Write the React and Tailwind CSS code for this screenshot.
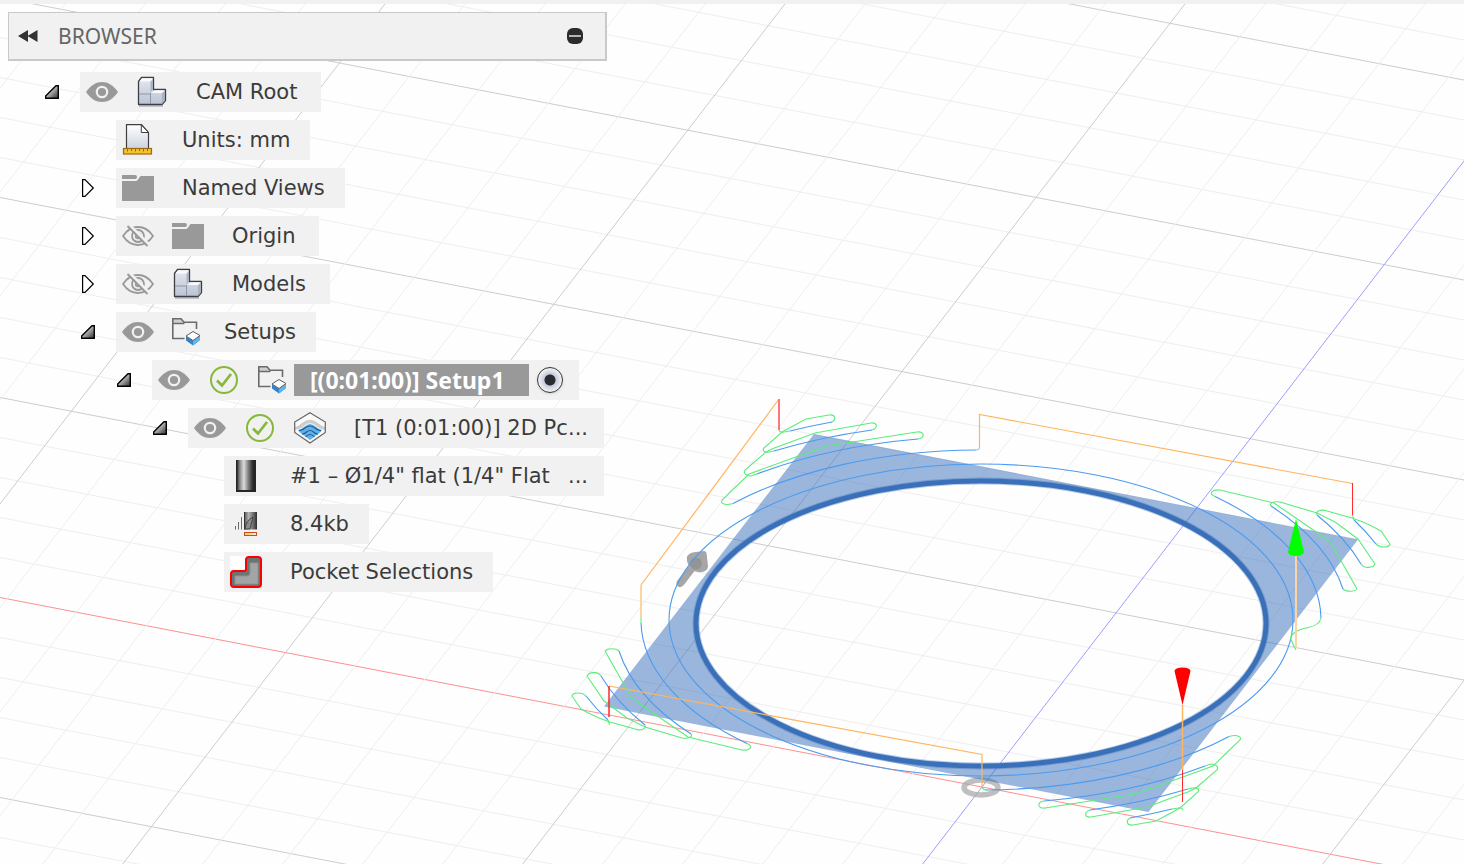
import { useState } from 'react';

const ORIGIN = { x: 982, y: 787 };

// grid steps, one major line every five
const ROW_STEP = 40;
const COL_STEP = 80;
const ROW_SLOPE = 0.193;
const COL_SLOPE = 0.77;

const range = (from, to) => Array.from({ length: to - from + 1 }, (_, i) => from + i);

function lineColor(n, axis) {
  if (n === 0) return axis;
  return n % 5 === 0 ? '#cdcdcd' : '#eeeeee';
}

function Grid() {
  const rows = range(-40, 30).sort((a, b) => (a % 5 === 0) - (b % 5 === 0));
  const cols = range(-30, 30).sort((a, b) => (a % 5 === 0) - (b % 5 === 0));

  return (
    <g strokeWidth="1">
      {rows.map((n) => (
        <line
          key={`r${n}`}
          x1={ORIGIN.x - 2000}
          y1={ORIGIN.y + n * ROW_STEP - 2000 * ROW_SLOPE}
          x2={ORIGIN.x + 3000}
          y2={ORIGIN.y + n * ROW_STEP + 3000 * ROW_SLOPE}
          stroke={lineColor(n, '#ff9090')}
        />
      ))}
      {cols.map((n) => (
        <line
          key={`c${n}`}
          x1={ORIGIN.x + n * COL_STEP + 1200 * COL_SLOPE}
          y1={ORIGIN.y - 1200}
          x2={ORIGIN.x + n * COL_STEP - 1200 * COL_SLOPE}
          y2={ORIGIN.y + 1200}
          stroke={lineColor(n, '#9d9dff')}
        />
      ))}
    </g>
  );
}

function CornerNorth() {
  return (
    <>
      <g stroke="#4b9bf0">
        <path d="M733 503.500 A340 170 0 0 1 976 450" />
        <path d="M757 474 A368 184 0 0 1 918 439" />
        <path d="M774 451 A396 198 0 0 1 872 430" />
        <path d="M790 431 A424 212 0 0 1 832 422" />
      </g>
      <g stroke="#5cec7c">
        <path d="M779 430 Q780 433 784 432 L790 431" />
        <path d="M832 422 C836 420 836 414 829 415 L806 419 L793 426 L782 432 L764 448 C762 451 765 453 769 452 L774 451" />
        <path d="M872 430 C878 428 878 422 871 423 L815 433 L773 448.500 L766 452 L745 470 C743 473 746 476 751 476 L757 474" />
        <path d="M918 439 C925 438 925 431 917 432 L827 446 L793 458 L749 474 L722 500 C720 503 724 506 733 503.500" />
      </g>
    </>
  );
}

function CornerEast() {
  return (
    <>
      <g stroke="#4b9bf0">
        <path d="M1215 496.500 A340 170 0 0 1 1321 618" />
        <path d="M1271 506 A368 184 0 0 1 1343 589" />
        <path d="M1317 515 A396 198 0 0 1 1361 564" />
        <path d="M1354 520 A424 212 0 0 1 1376 544" />
      </g>
      <g stroke="#5cec7c">
        <path d="M1352.500 515 L1354 520" />
        <path d="M1376 544 C1380 548 1389 548 1390 544 L1381 531 Q1374 527 1363 522 L1352 518 L1327 511 C1321 509 1315 511 1317 515" />
        <path d="M1361 564 C1364 569 1373 568 1375 564 L1358 539 L1335 522 L1317 513 L1280 502 C1273 501 1269 503 1271 506" />
        <path d="M1343 589 C1346 592 1355 592 1357 589 L1331 543 L1322 536 L1274 503 L1220 490 C1212 489 1208 494 1215 496.500" />
      </g>
    </>
  );
}

function Scene() {
  return (
    <svg className="absolute inset-0 w-full h-full" fill="none" aria-hidden="true">
      <Grid />

      {/* origin marker */}
      <ellipse cx="981" cy="787.500" rx="17" ry="7.500" stroke="#aaaaaa" strokeOpacity="0.75" strokeWidth="5.500" />

      {/* pocket floor with the round boss cut out */}
      <path
        d="M814 434 L1358 539.500 L1148.500 812 L604 706.500 Z M696 623 A285 143 0 1 0 1266 623 A285 143 0 1 0 696 623 Z"
        fill="#376eb9"
        fillOpacity="0.5"
        fillRule="evenodd"
      />
      <ellipse cx="981" cy="623.500" rx="285" ry="142.500" stroke="#3a70ba" strokeOpacity="0.35" strokeWidth="7" />
      <ellipse cx="981" cy="623.500" rx="285" ry="142.500" stroke="#3a70ba" strokeWidth="5" />

      <g fill="#888888" fillOpacity="0.75">
        <path d="M690 553.500 Q692 552 696 552 L704 551 Q706 551 706.500 553 L708 566 Q708 570 704 571.500 Q699 573 694.500 571 L685 583.500 Q682 588 679 587 Q675 585 677 581 L689 566 Q684 557 690 553.500 Z" />
        <circle cx="696" cy="563.500" r="6" fillOpacity="0.6" />
      </g>

      <g strokeWidth="1.1">
        <ellipse cx="981" cy="620" rx="312" ry="156" stroke="#4b9bf0" />
        <CornerNorth />
        <path d="M976 450 Q980 450 979.500 446" stroke="#8fbff0" />
        <g transform="rotate(180 981 620)">
          <CornerNorth />
          <CornerEast />
        </g>
        <CornerEast />
        <path d="M1321 618 C1320 623 1316 626 1308 627.500 C1301 629 1293 631 1290.500 638 Q1293 645 1296 650" stroke="#5cec7c" />
        <path d="M982 787 Q983 790 987 790" stroke="#5cec7c" />
      </g>

      <g stroke="#ffb55f" strokeWidth="1.2">
        <path d="M641 585 L779 399" />
        <path d="M979.500 447 V414.500 L1352.500 483.500" />
        <path d="M609 686 L982 754.500 V787" />
        <path d="M1182.500 705 V770" strokeWidth="1.500" />
      </g>
      <g stroke="#fdd3a2" strokeWidth="2">
        <path d="M641 585 V617" />
        <path d="M1296 556 V648" />
      </g>
      <path d="M641 617 V623" stroke="#a5f7b7" strokeWidth="2" />
      <g stroke="#ff2a2a">
        <path d="M779 399 V430" stroke="#ff7777" strokeWidth="2" />
        <path d="M1352.500 483 V515" />
        <path d="M609 686 V717" strokeWidth="2" strokeOpacity="0.75" />
        <path d="M1182.500 770 V802" />
      </g>

      <path d="M1296 519 L1288 552 Q1289 556 1296 556 Q1303 556 1304 552 Z" fill="#00ff00" />
      <path d="M1182.500 705 L1174.500 671 Q1175 667.500 1182.500 667.500 Q1190 667.500 1190.500 671 Z" fill="#ff0000" />
    </svg>
  );
}

function EyeIcon({ off }) {
  if (off) {
    return (
      <svg className="w-8 h-8" viewBox="0 0 32 32" fill="none" stroke="#999999" strokeWidth="1.8">
        <path d="M1 16 C5 10 10 7 16 7 S27 10 31 16 C27 22 22 25 16 25 S5 22 1 16 Z" />
        <circle cx="16" cy="16" r="6" />
        <circle cx="16" cy="16" r="2.300" />
        <path d="M7.500 5 L27.500 25" stroke="#f1f1f1" strokeWidth="3" />
        <path d="M5.500 6 L25.500 26" />
      </svg>
    );
  }
  return (
    <svg className="w-8 h-8" viewBox="0 0 32 32" fill="#999999">
      <path d="M0 16 C5 9 10 6 16 6 S27 9 32 16 C27 23 22 26 16 26 S5 23 0 16 Z" />
      <circle cx="16" cy="16" r="5.200" stroke="#f1f1f1" strokeWidth="2.200" />
    </svg>
  );
}

function CheckIcon() {
  return (
    <svg className="w-8 h-8" viewBox="0 0 32 32" fill="none" stroke="#86b93a">
      <circle cx="16" cy="16" r="13" strokeWidth="2" />
      <path d="M9 16.500 L14 21.500 L23 10" strokeWidth="2.800" />
    </svg>
  );
}

function FolderIcon() {
  return (
    <svg className="w-8 h-8" viewBox="0 0 32 32" fill="#999999">
      <path d="M0 3 H13 Q15 3 15 5 Q15 7 13 7 H0 Z" />
      <path d="M0 9 H13.500 Q15 9 16 7.500 L18.500 4 H32 V29 H0 Z" />
    </svg>
  );
}

function BodiesIcon() {
  return (
    <svg className="w-8 h-8" viewBox="0 0 32 32" stroke="#3c3f45" strokeLinejoin="round">
      <defs>
        <linearGradient id="body" x1="0" y1="0" x2="0" y2="1">
          <stop offset="0" stopColor="#e4e8f0" />
          <stop offset="1" stopColor="#bcc3d3" />
        </linearGradient>
      </defs>
      <path d="M3 30 H27" stroke="#c4c4c4" strokeWidth="2" />
      <path d="M2.500 5.500 L5.500 1.500 H17.500 V13.500 H29.500 V24.500 L26 28.500 H2.500 Z" fill="url(#body)" strokeWidth="1.300" />
      <path d="M3.500 5.500 L6 2.200 H16.800 L14 5.500 Z M15.500 17 L18.500 14.200 H28.800 L26 17 Z" fill="#fafbfd" stroke="none" />
      <path d="M26 17.500 L29 14.500 V24.500 L26 28 Z M14.500 6 L17 3 V13.500 L14.500 16 Z" fill="#aab2c2" stroke="none" />
      <path d="M3 18 H14.500 M14.500 17 V28" stroke="#8e97aa" fill="none" />
    </svg>
  );
}

function UnitsIcon() {
  return (
    <svg className="w-8 h-8" viewBox="0 0 32 32">
      <defs>
        <linearGradient id="page" x1="0" y1="0" x2="0" y2="1">
          <stop offset="0" stopColor="#ffffff" />
          <stop offset="1" stopColor="#cdd2df" />
        </linearGradient>
      </defs>
      <path d="M4.500 25 V0.700 H19.500 L26.500 8.500 V25" fill="url(#page)" stroke="#3f3f3f" strokeWidth="1.200" />
      <path d="M19.300 1 V8.500 H26.500 Z" fill="#ffffff" stroke="#3f3f3f" strokeLinejoin="round" />
      <rect x="1.500" y="24.500" width="28" height="5.500" fill="#f2c230" stroke="#a06a10" strokeWidth="1.200" />
      <path d="M5.500 25 V27.500 M9.500 25 V27 M13.500 25 V27.500 M17.500 25 V27 M21.500 25 V27.500 M25.500 25 V27" stroke="#a06a10" />
    </svg>
  );
}

function SetupIcon() {
  return (
    <svg className="w-8 h-8" viewBox="0 0 32 32" fill="none">
      <path d="M1 7.500 V2.700 H8.500 L11.500 7.500 Z" fill="#cfcfcf" />
      <path d="M12.500 22.500 H0.800 V2.700 H9 L12 6.200 H24.500 V13 M1 7.500 H11.500 L12.500 6.200" stroke="#6b6b6b" strokeWidth="1.600" />
      <path d="M14 20 L21 24.500 L28 19.500 V24 L21 29.500 L14 24.500 Z" fill="#2f86cc" />
      <path d="M21 24.500 L28 19.500 V24 L21 29.500 Z" fill="#63b3ea" />
      <path d="M14 20 L21 15.500 L28 19.500 L21 24.500 Z" fill="#ffffff" stroke="#5a5f66" />
    </svg>
  );
}

function PocketOpIcon() {
  return (
    <svg className="w-8 h-8" viewBox="0 0 32 32" fill="none">
      <path d="M16 0.700 L31.300 10 V20.500 L16 31 L0.700 20.500 V10 Z" fill="#fafafa" />
      <path d="M1 15 Q5 14 8 11 Q16 4.500 24 11 Q27 14 31 15 V18 L27.500 17 Q24 16 21.500 13.500 Q16 9 10.500 13.500 Q8 16 4.500 17 L1 18 Z" fill="#cdcdcd" />
      <path d="M4 18 Q8 17 10.500 14.500 Q16 9.500 21.500 14.500 Q24 17 28 18 L26 20.500 L16 28 L6 20.500 Z" fill="#62b0ea" />
      <path d="M5 18.800 Q9 18 11 16 Q16 12 21 16 Q23 18 27 18.800 M8 22.200 Q11 21.500 12.500 20 Q16 17 19.500 20 Q21 21.500 24 22.200 M11.500 25 Q16 20 20.500 25" stroke="#1d5c94" strokeWidth="1.100" />
      <path d="M16 0.700 L31.300 10 V20.500 L16 31 L0.700 20.500 V10 Z" stroke="#666666" strokeWidth="1.200" />
    </svg>
  );
}

function ToolIcon() {
  return (
    <svg className="w-8 h-8" viewBox="0 0 32 32">
      <defs>
        <linearGradient id="steel">
          <stop offset="0" stopColor="#2b2b2b" />
          <stop offset="0.150" stopColor="#888888" />
          <stop offset="0.380" stopColor="#dcdcdc" />
          <stop offset="0.600" stopColor="#8a8a8a" />
          <stop offset="0.850" stopColor="#333333" />
          <stop offset="1" stopColor="#1f1f1f" />
        </linearGradient>
      </defs>
      <rect x="6" y="0" width="20" height="32" fill="#262626" />
      <rect x="7" y="0" width="18" height="30" fill="url(#steel)" />
    </svg>
  );
}

function ToolpathSizeIcon() {
  return (
    <svg className="w-8 h-8" viewBox="0 0 32 32">
      <defs>
        <linearGradient id="hot">
          <stop offset="0" stopColor="#ffc24a" />
          <stop offset="1" stopColor="#fff4e0" />
        </linearGradient>
        <linearGradient id="cutter">
          <stop offset="0" stopColor="#4a4a4a" />
          <stop offset="0.350" stopColor="#b4b4b4" />
          <stop offset="0.800" stopColor="#5a5a5a" />
          <stop offset="1" stopColor="#2b2b2b" />
        </linearGradient>
      </defs>
      <path d="M5.500 21.500 V18 M8.500 21.500 V14 M11.500 21.500 V9" stroke="#6a6a6a" />
      <rect x="14" y="4" width="13" height="17.500" fill="url(#cutter)" />
      <path d="M15 21 Q16 12 23 9 L20 21 Z" fill="#8b8b8b" stroke="#444444" />
      <path d="M14.500 4 V21.500" stroke="#333333" />
      <rect x="14.500" y="24.500" width="12" height="3" fill="url(#hot)" stroke="#c8501e" />
    </svg>
  );
}

function PocketIcon() {
  const outline = 'M16 4 Q16 1 19 1 H28 Q31 1 31 4 V28 Q31 31 28 31 H4 Q1 31 1 28 V18 Q1 15 4 15 H14 Q16 15 16 13 Z';
  return (
    <svg className="w-8 h-8" viewBox="0 0 32 32">
      <path d="M0 0 H18 V16 H0 Z" fill="#ffffff" />
      <path d={outline} fill="#6c7476" />
      <path d="M20 7 H28 V28 H5 V20 H17 Q20 20 20 17 Z" fill="#a3a5a5" stroke="#8c9292" strokeLinejoin="round" />
      <path d={outline} fill="none" stroke="#ff0000" strokeWidth="2" />
    </svg>
  );
}

const ICONS = {
  bodies: BodiesIcon,
  units: UnitsIcon,
  folder: FolderIcon,
  setup: SetupIcon,
  pocketOp: PocketOpIcon,
  tool: ToolIcon,
  size: ToolpathSizeIcon,
  pocket: PocketIcon,
};

const tree = {
  label: 'CAM Root',
  icon: 'bodies',
  eye: 'on',
  open: true,
  children: [
    { label: 'Units: mm', icon: 'units' },
    { label: 'Named Views', icon: 'folder', open: false },
    { label: 'Origin', icon: 'folder', eye: 'off', open: false },
    { label: 'Models', icon: 'bodies', eye: 'off', open: false },
    {
      label: 'Setups',
      icon: 'setup',
      eye: 'on',
      open: true,
      children: [
        {
          label: '[(0:01:00)] Setup1',
          icon: 'setup',
          eye: 'on',
          checked: true,
          active: true,
          open: true,
          children: [
            {
              label: '[T1 (0:01:00)] 2D Pc',
              cut: true,
              icon: 'pocketOp',
              eye: 'on',
              checked: true,
              open: true,
              children: [
                { label: '#1 – Ø1/4" flat (1/4" Flat', cut: true, icon: 'tool' },
                { label: '8.4kb', icon: 'size' },
                { label: 'Pocket Selections', icon: 'pocket' },
              ],
            },
          ],
        },
      ],
    },
  ],
};

function Expander({ open, label, onClick }) {
  return (
    <button type="button" onClick={onClick} aria-expanded={open} aria-label={`Toggle ${label}`} className="w-9 h-10 shrink-0 flex items-center">
      {open ? (
        <svg className="w-4 h-4" viewBox="0 0 16 16">
          <defs>
            <linearGradient id="wedge" x1="0.300" y1="0.300" x2="1" y2="1">
              <stop offset="0" stopColor="#d8d8d8" />
              <stop offset="1" stopColor="#2a2a2a" />
            </linearGradient>
          </defs>
          <path d="M1.700 12 L12 1.700 H14.300 V14.300 H1.700 Z" fill="url(#wedge)" stroke="#000000" strokeWidth="1.400" />
        </svg>
      ) : (
        <svg className="w-4 h-5" viewBox="0 0 16 20">
          <path d="M2.600 1.600 H5 L13.300 10 L5 18.400 H2.600 Z" fill="#ffffff" stroke="#000000" strokeWidth="1.200" />
        </svg>
      )}
    </button>
  );
}

function TreeNode({ node }) {
  const [open, setOpen] = useState(node.open);
  const [hidden, setHidden] = useState(node.eye === 'off');
  const Icon = ICONS[node.icon];
  const canExpand = node.open !== undefined;

  let labelStyle = node.eye ? 'ml-7 pr-6' : 'ml-7 pr-5';
  if (node.icon === 'setup') labelStyle = 'ml-5 pr-5';
  if (node.cut) labelStyle = 'ml-7 pr-4 flex-1 justify-between';
  if (node.active) labelStyle = "ml-1 h-8 pl-4 pr-6 bg-[#999999] text-white font-['Noto_Sans',sans-serif] text-[23px] font-bold";

  return (
    <li>
      <div className="flex">
        {canExpand ? (
          <Expander open={open} label={node.label} onClick={() => setOpen(!open)} />
        ) : (
          <span className="w-9 shrink-0" />
        )}
        <div className={`h-10 pl-1.5 flex items-center bg-[#f1f1f1] ${node.cut ? 'flex-1' : ''}`}>
          <div className="flex items-center gap-[18px] shrink-0">
            {node.eye && (
              <button type="button" aria-pressed={!hidden} aria-label={`Show ${node.label}`} onClick={() => setHidden(!hidden)}>
                <EyeIcon off={hidden} />
              </button>
            )}
            {node.checked && <CheckIcon />}
            <Icon />
          </div>
          <span className={`flex items-center whitespace-nowrap ${labelStyle}`}>
            <span>{node.label}</span>
            {node.cut && <span>...</span>}
          </span>
          {node.active && (
            <input
              type="radio"
              name="active-setup"
              aria-label="Active setup"
              defaultChecked
              className="appearance-none w-[26px] h-[26px] ml-2 mr-4 rounded-full border border-[#333333] shadow bg-[radial-gradient(circle,#2b2b33_5px,#c6ccda_6px,#f4f5f8_12px)]"
            />
          )}
        </div>
      </div>
      {open && node.children && (
        <ul className="mt-2 pl-9 flex flex-col gap-2">
          {node.children.map((child) => (
            <TreeNode key={child.label} node={child} />
          ))}
        </ul>
      )}
    </li>
  );
}

export default function App() {
  const [collapsed, setCollapsed] = useState(false);

  return (
    <main className="relative min-h-screen overflow-hidden bg-[#fefefe] font-['DejaVu_Sans',sans-serif] text-[21px] leading-8 text-[#3b3b3b]">
      <Scene />
      <div className="relative">
        <div className="h-1 bg-[#f1f1f1]" />
        <aside className="w-[607px] max-w-full p-2 pr-0">
          <header className="h-[49px] pl-[9px] pr-[22px] flex items-center bg-[#f1f1f1] border border-r-2 border-b-2 border-[#c9c9c9]">
            <button type="button" aria-label="Dock left" className="mr-5">
              <svg className="w-5 h-3" viewBox="0 0 20 12" fill="#333333">
                <path d="M0 6 L10 0 V12 Z M9.500 6 L19.500 0 V12 Z" />
              </svg>
            </button>
            <h1 className="font-['Noto_Sans',sans-serif] text-[#666666]">BROWSER</h1>
            <button type="button" aria-label="Collapse browser" className="ml-auto" onClick={() => setCollapsed(!collapsed)}>
              <svg className="w-4 h-4" viewBox="0 0 16 16">
                <rect width="16" height="16" rx="6" fill="#2b2b2b" />
                <path d="M2 8 H14" stroke="#b5b5b5" strokeWidth="2" />
              </svg>
            </button>
          </header>
          {!collapsed && (
            <ul className="mt-[11px] pl-9 pr-[3px]">
              <TreeNode node={tree} />
            </ul>
          )}
        </aside>
      </div>
    </main>
  );
}
